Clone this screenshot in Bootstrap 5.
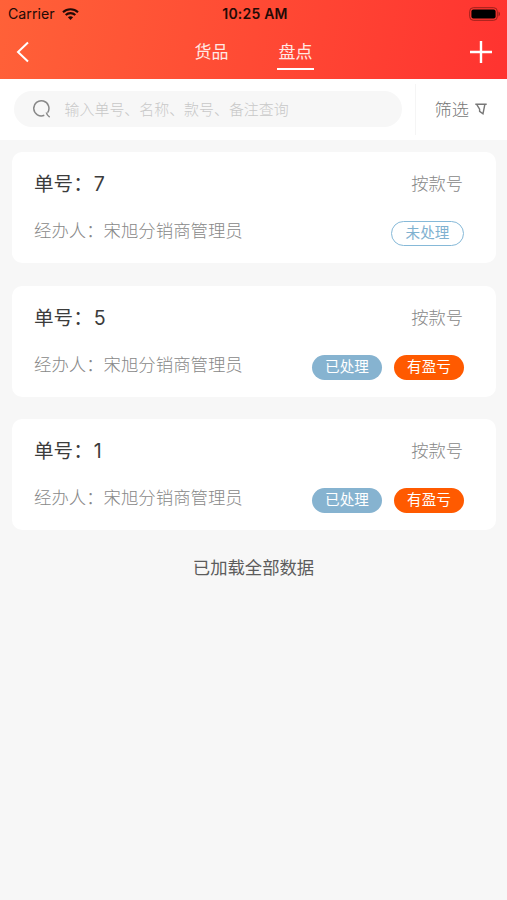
<!DOCTYPE html>
<html lang="zh-CN">
<head>
<meta charset="utf-8">
<meta name="viewport" content="width=device-width, initial-scale=1">
<title>盘点</title>
<link href="https://cdn.jsdelivr.net/npm/bootstrap@5.3.0/dist/css/bootstrap.min.css" rel="stylesheet">
<style>
body{background:#f7f7f7;font-family:Inter,"Noto Sans CJK SC",sans-serif;font-weight:300;min-height:900px;color:#333}
svg{display:block;flex:none}
.app-head{height:78.5px;background:linear-gradient(100deg,#ff6138 0%,#ff3330 100%)}
.status{height:27px;padding:0 6px 0 8px;font-size:14.2px;line-height:27px;color:#230a06;font-weight:400}
.status-time{font-size:14px;font-weight:600;letter-spacing:.2px;margin-left:1px}
.wifi{margin-left:7px}
.side{flex:1 1 0}
.titlebar{height:50px;padding:0 15px 0 16px}
.tab-item{font-size:17px;line-height:24px;height:30px;color:#ffe9e4;font-weight:400;width:37px;border-bottom:2px solid transparent;text-align:center;white-space:nowrap}
.tab-item.on{border-color:#fff}
.tabs-wrap{gap:46px;padding-top:13px}
.tabs-wrap .tab-item:first-child{margin-left:-1px;margin-right:1px}
.search-row{height:61.5px}
.search-box{width:388px;height:36px;margin-left:14px;background:#f7f7f7;padding-left:19px;font-size:14.95px;color:#c8c8c8}
.search-box span{margin-left:12.6px;padding-top:2px}
.rule{width:1px;height:51px;background:#f5f5f5;margin-left:13px}
.filter{margin-left:18.5px;gap:6px;font-size:17.2px;color:#777}
.filter span{padding-top:2px}
.list{padding:12px 11px 0 12px;gap:22.5px}
.order{height:111px;border-radius:10px;padding:18px 33px 0 22px}
.order-no{font-size:19.6px;line-height:28px;color:#3c3c3c;font-weight:400}
.order-no b{font-weight:400;margin-left:1px}
.order-kind{font-size:17.3px;line-height:28px;color:#888}
.order-by{font-size:17.4px;line-height:26px;color:#888;margin-top:20px}
.tags{gap:12px;margin:23px -1px 0 0}
.tag{height:25px;width:70px;font-size:14.6px;line-height:25px;color:#fff;background:#86b3d0;text-align:center;font-weight:400}
.tag.open{width:73px;background:#fff;border:1.5px solid #86b9d8;color:#7fb1d0;line-height:23px}
.tag.diff{background:#ff5a00}
.done{font-size:17.35px;line-height:26px;color:#5c5c5c;margin-top:25px;font-weight:400}
</style>
</head>
<body>
<header class="app-head">
  <div class="status d-flex align-items-center">
    <div class="side d-flex align-items-center">
      <span>Carrier</span>
      <svg class="wifi" width="17" height="12" viewBox="0 0 17 12" fill="none" stroke="#230a06" stroke-width="2.1"><path d="M1 4.3C5.2.3 11.8.3 16 4.3M3.7 7.1c2.7-2.6 6.9-2.6 9.6 0"/><path d="M8.5 12 5.9 9.3c1.5-1.3 3.7-1.3 5.2 0z" fill="#230a06" stroke="none"/></svg>
    </div>
    <span class="status-time">10:25 AM</span>
    <div class="side d-flex justify-content-end">
      <svg width="32" height="14" viewBox="0 0 32 14"><rect x=".7" y=".7" width="27.6" height="12.6" rx="3.6" fill="none" stroke="#9c211b"/><rect x="2.4" y="2.4" width="24.2" height="9.2" rx="2" fill="#000"/><path d="M29.5 4.6c2 .8 2 4 0 4.8z" fill="#9c211b"/></svg>
    </div>
  </div>
  <nav class="titlebar d-flex align-items-center">
    <div class="side"><svg width="14" height="22" viewBox="0 0 14 22" fill="none" stroke="#fff" stroke-width="2"><path d="M12 1.5 2 11l10 9.5"/></svg></div>
    <div class="tabs-wrap d-flex align-self-start">
      <div class="tab-item">货品</div>
      <div class="tab-item on">盘点</div>
    </div>
    <div class="side d-flex justify-content-end"><svg width="22" height="22" viewBox="0 0 22 22" stroke="#fff" stroke-width="2.4"><path d="M0 11h22M11 0v22"/></svg></div>
  </nav>
</header>
<section class="search-row bg-white d-flex align-items-center">
  <div class="search-box rounded-pill d-flex align-items-center">
    <svg width="19" height="20" viewBox="0 0 19 20" fill="none" stroke="#888" stroke-width="1.5"><path d="M11.3 16.3A7.6 7.6 0 1 1 14.6 13.6M13.3 13.4q.6 3 3.4 4.8"/></svg>
    <span>输入单号、名称、款号、备注查询</span>
  </div>
  <div class="rule"></div>
  <div class="filter d-flex align-items-center">
    <span>筛选</span>
    <svg width="12" height="12" viewBox="0 0 12 12" fill="none" stroke="#777" stroke-width="1.4"><path d="M.3 1.3h11.4M1.7 1.3l2.9 4.8v2.2l3.4 2.4 1.8-9.1"/></svg>
  </div>
</section>
<main class="list d-flex flex-column">
  <article class="order bg-white">
    <div class="d-flex justify-content-between"><div class="order-no">单号：<b>7</b></div><div class="order-kind">按款号</div></div>
    <div class="d-flex justify-content-between"><div class="order-by">经办人：宋旭分销商管理员</div><div class="tags d-flex"><span class="tag open rounded-pill">未处理</span></div></div>
  </article>
  <article class="order bg-white">
    <div class="d-flex justify-content-between"><div class="order-no">单号：<b>5</b></div><div class="order-kind">按款号</div></div>
    <div class="d-flex justify-content-between"><div class="order-by">经办人：宋旭分销商管理员</div><div class="tags d-flex"><span class="tag rounded-pill">已处理</span><span class="tag diff rounded-pill">有盈亏</span></div></div>
  </article>
  <article class="order bg-white">
    <div class="d-flex justify-content-between"><div class="order-no">单号：<b>1</b></div><div class="order-kind">按款号</div></div>
    <div class="d-flex justify-content-between"><div class="order-by">经办人：宋旭分销商管理员</div><div class="tags d-flex"><span class="tag rounded-pill">已处理</span><span class="tag diff rounded-pill">有盈亏</span></div></div>
  </article>
</main>
<div class="done text-center">已加载全部数据</div>
<script src="https://cdn.jsdelivr.net/npm/bootstrap@5.3.0/dist/js/bootstrap.bundle.min.js"></script>
</body>
</html>
